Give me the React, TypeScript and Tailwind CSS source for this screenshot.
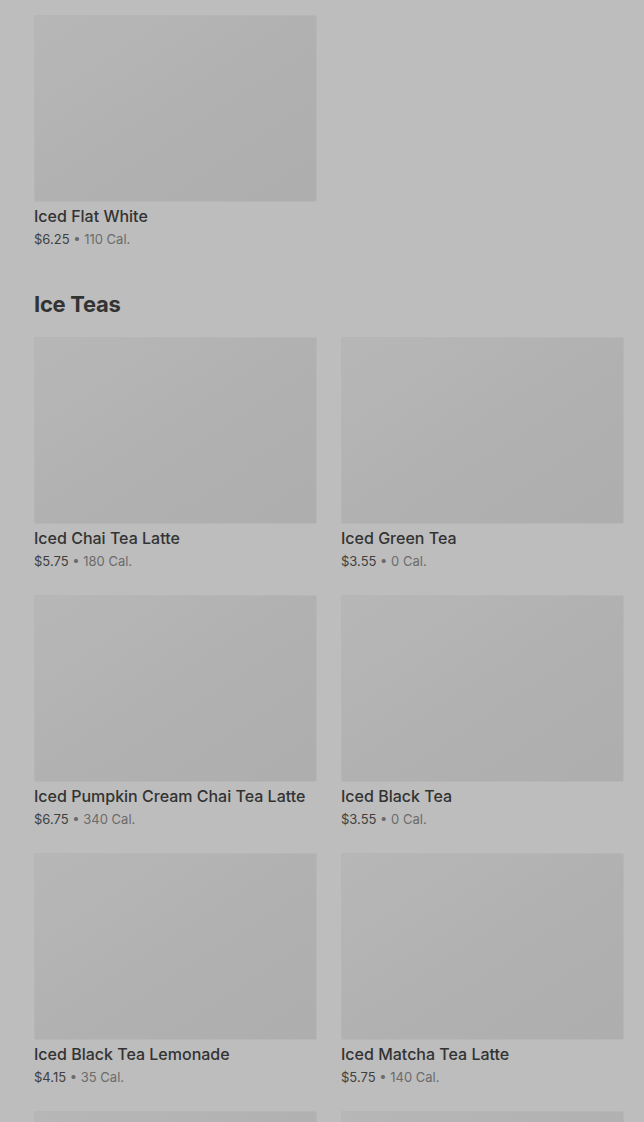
const teas = [
  { name: "Iced Chai Tea Latte", price: "$5.75", cal: "180 Cal." },
  { name: "Iced Green Tea", price: "$3.55", cal: "0 Cal." },
  { name: "Iced Pumpkin Cream Chai Tea Latte", price: "$6.75", cal: "340 Cal." },
  { name: "Iced Black Tea", price: "$3.55", cal: "0 Cal." },
  { name: "Iced Black Tea Lemonade", price: "$4.15", cal: "35 Cal." },
  { name: "Iced Matcha Tea Latte", price: "$5.75", cal: "140 Cal." },
];

function Thumb() {
  return (
    <div className="h-[187px] w-full rounded-[2px] border border-[#b6b6b6] bg-gradient-to-br from-[#b7b7b7] via-[#b1b1b1] to-[#aeaeae]" />
  );
}

function ItemCard({ name, price, cal }: { name: string; price: string; cal: string }) {
  return (
    <div className="flex flex-col">
      <Thumb />
      <div className="mt-[4px] text-[16px] leading-[20px] font-medium text-[#333333] whitespace-nowrap">
        {name}
      </div>
      <div className="mt-[3px] text-[13px] leading-[20px] text-[#404040]">
        {price}
        <span className="text-[#6b6b6b]"> • {cal}</span>
      </div>
    </div>
  );
}

export default function App() {
  return (
    <main
      className="min-h-screen h-[1122px] overflow-hidden bg-[#bdbdbd] pl-[34px] pr-[20px] pt-[15px]"
      style={{ fontFamily: "Inter, 'Noto Sans', sans-serif" }}
    >
      <div className="grid grid-cols-2 gap-x-[24px]">
        <ItemCard name="Iced Flat White" price="$6.25" cal="110 Cal." />
      </div>

      <h2 className="mt-[39px] text-[22px] leading-[32px] font-bold tracking-[-0.3px] text-[#333333]">
        Ice Teas
      </h2>

      <div className="mt-[17px] grid grid-cols-2 gap-x-[24px] gap-y-[24px]">
        {teas.map((t) => (
          <ItemCard key={t.name} {...t} />
        ))}
        {/* next row, only the tops of the pictures are in view */}
        <Thumb />
        <Thumb />
      </div>
    </main>
  );
}
